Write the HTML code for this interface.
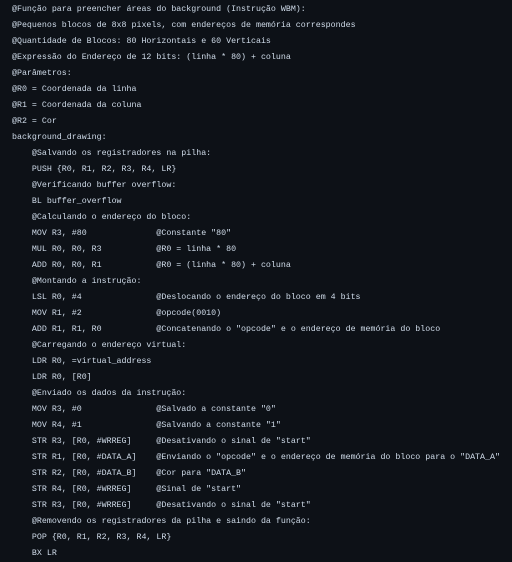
<!DOCTYPE html>
<html><head><meta charset="utf-8"><style>
html,body{margin:0;padding:0;background:#0d1117;width:512px;height:562px;overflow:hidden}
pre{margin:0;padding:0 0 0 12px;position:absolute;top:2px;left:0;font-family:"Liberation Mono",monospace;font-size:8.3px;line-height:16px;color:#d0dcea;white-space:pre}
</style></head><body><pre>@Função para preencher áreas do background (Instrução WBM):
@Pequenos blocos de 8x8 pixels, com endereços de memória correspondes
@Quantidade de Blocos: 80 Horizontais e 60 Verticais
@Expressão do Endereço de 12 bits: (linha * 80) + coluna
@Parâmetros:
@R0 = Coordenada da linha
@R1 = Coordenada da coluna
@R2 = Cor
background_drawing:
    @Salvando os registradores na pilha:
    PUSH {R0, R1, R2, R3, R4, LR}
    @Verificando buffer overflow:
    BL buffer_overflow
    @Calculando o endereço do bloco:
    MOV R3, #80              @Constante "80"
    MUL R0, R0, R3           @R0 = linha * 80
    ADD R0, R0, R1           @R0 = (linha * 80) + coluna
    @Montando a instrução:
    LSL R0, #4               @Deslocando o endereço do bloco em 4 bits
    MOV R1, #2               @opcode(0010)
    ADD R1, R1, R0           @Concatenando o "opcode" e o endereço de memória do bloco
    @Carregando o endereço virtual:
    LDR R0, =virtual_address
    LDR R0, [R0]
    @Enviado os dados da instrução:
    MOV R3, #0               @Salvado a constante "0"
    MOV R4, #1               @Salvando a constante "1"
    STR R3, [R0, #WRREG]     @Desativando o sinal de "start"
    STR R1, [R0, #DATA_A]    @Enviando o "opcode" e o endereço de memória do bloco para o "DATA_A"
    STR R2, [R0, #DATA_B]    @Cor para "DATA_B"
    STR R4, [R0, #WRREG]     @Sinal de "start"
    STR R3, [R0, #WRREG]     @Desativando o sinal de "start"
    @Removendo os registradores da pilha e saindo da função:
    POP {R0, R1, R2, R3, R4, LR}
    BX LR</pre></body></html>
